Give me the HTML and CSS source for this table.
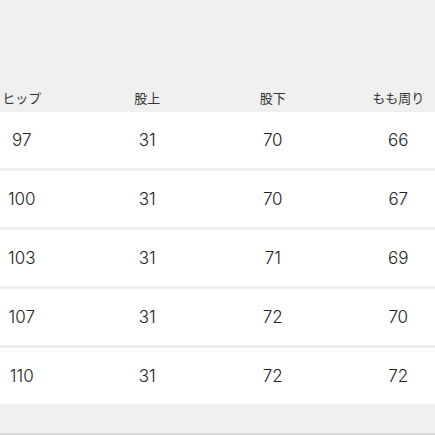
FILE: index.html
```html
<!DOCTYPE html>
<html lang="ja">
<head>
<meta charset="utf-8">
<link rel="stylesheet" href="styles.css">
</head>
<body>
<div class="page">
  <div class="table">
    <div class="row head">
      <div class="cell">ヒップ</div>
      <div class="cell">股上</div>
      <div class="cell">股下</div>
      <div class="cell">もも周り</div>
    </div>
    <div class="row">
      <div class="cell">97</div><div class="cell">31</div><div class="cell">70</div><div class="cell">66</div>
    </div>
    <div class="row">
      <div class="cell">100</div><div class="cell">31</div><div class="cell">70</div><div class="cell">67</div>
    </div>
    <div class="row">
      <div class="cell">103</div><div class="cell">31</div><div class="cell">71</div><div class="cell">69</div>
    </div>
    <div class="row">
      <div class="cell">107</div><div class="cell">31</div><div class="cell">72</div><div class="cell">70</div>
    </div>
    <div class="row">
      <div class="cell">110</div><div class="cell">31</div><div class="cell">72</div><div class="cell">72</div>
    </div>
  </div>
  <div class="footer"></div>
</div>
</body>
</html>
```
FILE: styles.css
```css
html, body {
  margin: 0;
  padding: 0;
  background: #f0f0f0;
}
.page {
  width: 435px;
  height: 435px;
  overflow: hidden;
  display: flex;
  flex-direction: column;
  font-family: "Noto Sans CJK JP", "Noto Sans", sans-serif;
  color: #333;
}
.table {
  margin-top: 83px;
  margin-left: -41px;
  display: flex;
  flex-direction: column;
  gap: 3px;
  background: #efefef;
}
.row {
  display: grid;
  grid-template-columns: repeat(4, 125.5px);
  height: 56px;
  background: #fff;
  align-items: center;
}
.row.head {
  height: 29px;
  margin-bottom: -3px;
  background: #f0f0f0;
}
.cell {
  text-align: center;
  font-family: Inter, "Noto Sans CJK JP", sans-serif;
  font-size: 17px;
  font-weight: 300;
  line-height: 1;
  color: #222;
}
.head .cell {
  font-family: "Noto Sans CJK JP", "Noto Sans", sans-serif;
  font-size: 13px;
  font-weight: 400;
  color: #333;
}
.footer {
  height: 29px;
  background: #f0f0f0;
  border-bottom: 2px solid #d9d9d9;
}
```
